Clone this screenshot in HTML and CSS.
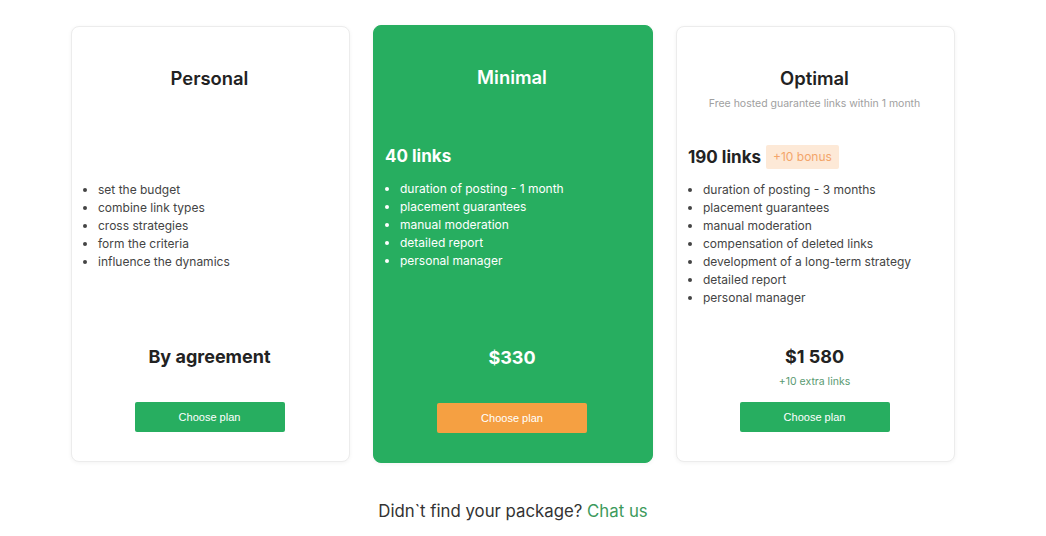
FILE: index.html
```html
<!DOCTYPE html>
<html lang="en">
<head>
<meta charset="utf-8">
<title>Plans</title>
<link rel="stylesheet" href="styles.css">
</head>
<body>
<main class="page">
  <section class="plans">
    <article class="card">
      <header class="head">
        <h2 class="title">Personal</h2>
      </header>
      <div class="links"></div>
      <ul class="features">
        <li>set the budget</li>
        <li>combine link types</li>
        <li>cross strategies</li>
        <li>form the criteria</li>
        <li>influence the dynamics</li>
      </ul>
      <footer class="foot">
        <div class="price">By agreement</div>
        <div class="extra"></div>
        <button class="btn">Choose plan</button>
      </footer>
    </article>

    <article class="card card-green">
      <header class="head">
        <h2 class="title">Minimal</h2>
      </header>
      <div class="links">40 links</div>
      <ul class="features">
        <li>duration of posting - 1 month</li>
        <li>placement guarantees</li>
        <li>manual moderation</li>
        <li>detailed report</li>
        <li>personal manager</li>
      </ul>
      <footer class="foot">
        <div class="price">$330</div>
        <div class="extra"></div>
        <button class="btn btn-orange">Choose plan</button>
      </footer>
    </article>

    <article class="card">
      <header class="head">
        <h2 class="title">Optimal</h2>
        <p class="subtitle">Free hosted guarantee links within 1 month</p>
      </header>
      <div class="links">190 links <span class="bonus">+10 bonus</span></div>
      <ul class="features">
        <li>duration of posting - 3 months</li>
        <li>placement guarantees</li>
        <li>manual moderation</li>
        <li>compensation of deleted links</li>
        <li>development of a long-term strategy</li>
        <li>detailed report</li>
        <li>personal manager</li>
      </ul>
      <footer class="foot">
        <div class="price">$1 580</div>
        <div class="extra">+10 extra links</div>
        <button class="btn">Choose plan</button>
      </footer>
    </article>
  </section>
  <p class="more">Didn`t find your package? <a class="chat" href="#">Chat us</a></p>
</main>
</body>
</html>
```

FILE: styles.css
```css
* { box-sizing: border-box; }
html, body { margin: 0; background: #fff; }
body {
  font-family: Inter, "Noto Sans", "Liberation Sans", sans-serif;
  color: #222;
}
.page {
  width: 884px;
  margin-left: 71px;
  padding-top: 26px;
}
.plans {
  display: flex;
  gap: 23px;
}
.card {
  width: 279px;
  height: 436px;
  border: 1px solid #ececec;
  border-radius: 8px;
  box-shadow: 0 1px 4px rgba(0,0,0,0.05);
  padding: 40px 13px 29px 11px;
  display: flex;
  flex-direction: column;
  background: #fff;
}
.card-green {
  width: 280px;
  background: #27ae60;
  border-color: #27ae60;
  color: #fff;
  margin-top: -1px;
  height: 438px;
}
.head {
  height: 78px;
  text-align: center;
}
.title {
  margin: 0;
  font-size: 18.4px;
  line-height: 22px;
  font-weight: 600;
}
.subtitle {
  margin: 8px 0 0;
  font-size: 10.5px;
  line-height: 14px;
  color: #a0a0a0;
}
.links {
  height: 24px;
  display: flex;
  align-items: center;
  font-size: 17px;
  font-weight: 700;
  gap: 5px;
}
.bonus {
  display: inline-block;
  background: #fde9d7;
  color: #f3a56a;
  font-size: 12px;
  font-weight: 400;
  line-height: 24px;
  padding: 0 7px;
  border-radius: 2px;
}
.features {
  margin: 12px 0 0;
  padding-left: 15px;
  font-size: 12px;
  line-height: 18px;
  color: #444;
}
.card-green .features { color: #fff; }
.foot {
  margin-top: auto;
  display: flex;
  flex-direction: column;
  align-items: center;
}
.price {
  font-size: 18px;
  font-weight: 700;
  line-height: 24px;
}
.extra {
  height: 33px;
  padding-top: 6px;
  font-size: 10.5px;
  line-height: 14px;
  color: #5a9a72;
}
.btn {
  width: 150px;
  height: 30px;
  border: 0;
  border-radius: 2px;
  background: #27ae60;
  color: #fff;
  font-family: "Liberation Sans", Arial, sans-serif;
  font-size: 11px;
  cursor: pointer;
}
.btn-orange { background: #f5a042; }
.more {
  margin: 38px 0 0;
  text-align: center;
  font-size: 16.8px;
  line-height: 20px;
  color: #333;
}
.chat {
  color: #3c9a5c;
  text-decoration: none;
}
```
